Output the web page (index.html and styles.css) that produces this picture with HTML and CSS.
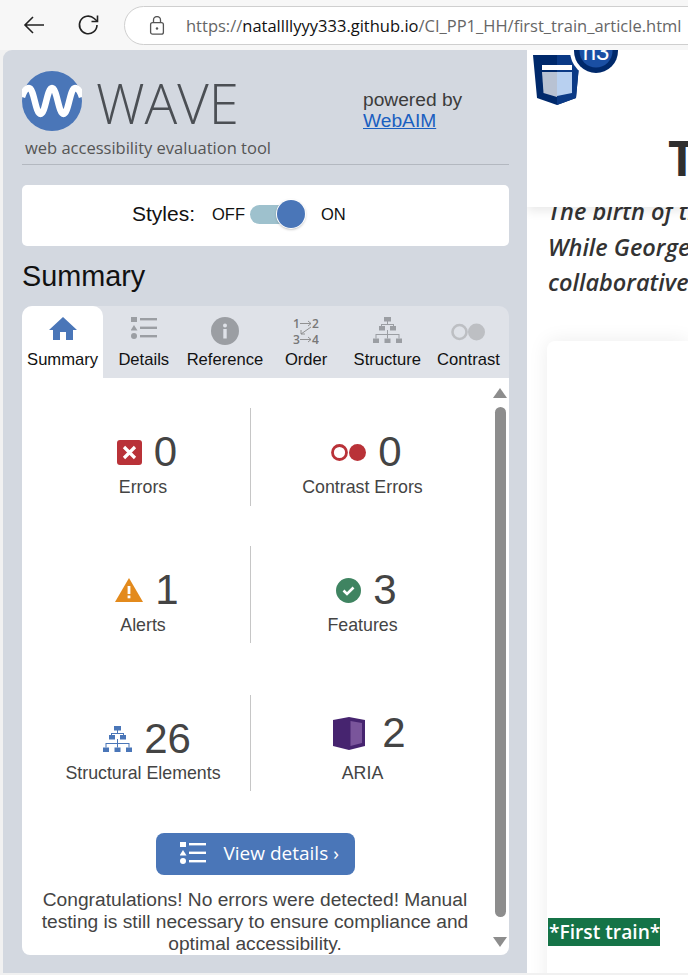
FILE: index.html
```html
<!DOCTYPE html>
<html lang="en">
<head>
  <meta charset="UTF-8">
  <meta name="viewport" content="width=device-width, initial-scale=1.0">
  <title>WAVE Summary</title>
  <link rel="stylesheet" href="styles.css">
</head>
<body>

<svg class="defs" width="0" height="0" aria-hidden="true">
  <symbol id="i-list" viewBox="0 0 26 22">
    <rect x="0" y="0" width="6" height="5"/>
    <path d="M3 8 L6.5 13.5 H-.5 Z"/>
    <circle cx="3" cy="19" r="3"/>
    <rect x="9" y="1" width="17" height="2.4"/>
    <rect x="9" y="9.6" width="17" height="2.4"/>
    <rect x="9" y="18" width="17" height="2.4"/>
  </symbol>
  <symbol id="i-tree" viewBox="0 0 29 26">
    <rect x="11" y="0" width="7" height="4.5"/>
    <rect x="6" y="9" width="6" height="4.5"/>
    <rect x="17" y="9" width="6" height="4.5"/>
    <rect x="0" y="21.5" width="6" height="4.5"/>
    <rect x="11.5" y="21.5" width="6" height="4.5"/>
    <rect x="23" y="21.5" width="6" height="4.5"/>
    <path d="M14 4h1v3h6v2h-1V8H9v1H8V7h6zM14 13h1v4h11.5v4.500h-1V18H15v3.500h-1V18H3.500v3.500h-1V17H14z"/>
  </symbol>
</svg>

<div class="toolbar">
  <svg class="tool-icon" width="24" height="20" viewBox="0 0 24 20"><path d="M22 10H3M11 2 L3 10 L11 18" fill="none" stroke="#222" stroke-width="1.6"/></svg>
  <svg class="tool-icon reload" width="24" height="24" viewBox="0 0 24 24"><path d="M20 12a8.800 8.800 0 1 1-2.800-6.500L20 8" fill="none" stroke="#222" stroke-width="1.600"/><path d="M20.500 2.500V8.500H14.500" fill="none" stroke="#222" stroke-width="1.600"/></svg>
  <div class="address">
    <svg width="16" height="19" viewBox="0 0 16 19"><path d="M4.500 6.500V4a3.500 3.500 0 0 1 7 0v2.500" fill="none" stroke="#555" stroke-width="1.300"/><rect x="1.600" y="6.600" width="12.800" height="11.600" rx="2" fill="none" stroke="#555" stroke-width="1.300"/><circle cx="8" cy="12.500" r="1.200" fill="#555"/></svg>
    <span class="url">https://<b>natallllyyy333.github.io</b>/CI_PP1_HH/first_train_article.html</span>
  </div>
</div>

<div class="main">
  <div class="wave">
    <div class="brand">
      <div class="logo">
        <div class="logo-top">
          <svg width="60" height="60" viewBox="0 0 60 60"><circle cx="30" cy="30" r="30" fill="#4a76b8"/><path d="M0 26 C2 20 4 17 7 17 C12 17 13.500 43 18.500 43 C23.500 43 25 17 30 17 C35 17 36.500 43 41.500 43 C46.500 43 48 17 53 17 C56 17 58 20 60 26" fill="none" stroke="#fff" stroke-width="6.500"/></svg>
          <span class="wave-name">WAVE</span>
        </div>
        <div class="tagline">web accessibility evaluation tool</div>
      </div>
      <div class="powered">powered by<br><a href="#">WebAIM</a></div>
    </div>

    <div class="styles-box">
      <span class="styles-label">Styles:</span>
      <span class="off">OFF</span>
      <span class="toggle"><span class="knob"></span></span>
      <span class="on">ON</span>
    </div>

    <h1>Summary</h1>

    <div class="tabs">
      <div class="tab active">
        <svg class="tab-icon" width="28" height="23" viewBox="0 0 28 23"><path fill="#4a76b8" d="M14 0 L28 13 H24 V23 H17 V15 H11 V23 H4 V13 H0 Z"/></svg>
        <span>Summary</span>
      </div>
      <div class="tab">
        <svg class="tab-icon" width="26" height="22"><use href="#i-list"/></svg>
        <span>Details</span>
      </div>
      <div class="tab">
        <svg class="tab-icon" width="28" height="28" viewBox="0 0 28 28"><circle cx="14" cy="14" r="14"/><circle cx="14" cy="8.500" r="2" fill="#dfe2e8"/><rect x="12.300" y="12" width="3.400" height="9.500" fill="#dfe2e8"/></svg>
        <span>Reference</span>
      </div>
      <div class="tab">
        <svg class="tab-icon order-icon" width="26" height="38" viewBox="0 -6 26 38">
          <text x="0" y="11" class="order-num">1</text>
          <text x="19" y="11" class="order-num">2</text>
          <text x="0" y="27" class="order-num">3</text>
          <text x="19" y="27" class="order-num">4</text>
          <path d="M7 6.500H18M15 4l3 2.500-3 2.500M7 22.500H18M15 20l3 2.500-3 2.500M18 10L8 17M8 13v4h4" fill="none" stroke="#888" stroke-width=".9"/>
        </svg>
        <span>Order</span>
      </div>
      <div class="tab">
        <svg class="tab-icon" width="29" height="26"><use href="#i-tree"/></svg>
        <span>Structure</span>
      </div>
      <div class="tab">
        <svg class="tab-icon contrast-tab" width="34" height="18" viewBox="0 0 34 18"><circle cx="8.500" cy="9" r="7" fill="none" stroke="#bdbfc3" stroke-width="2.600"/><circle cx="25.500" cy="9" r="8.500" fill="#bdbfc3"/></svg>
        <span>Contrast</span>
      </div>
    </div>

    <div class="panel">
      <div class="summary">
        <div class="stat-row first">
          <div class="stat">
            <div class="count">
              <svg width="25" height="25" viewBox="0 0 25 25"><rect width="25" height="25" rx="3" fill="#b93238"/><path d="M7 7L18 18M18 7L7 18" stroke="#fff" stroke-width="3.200"/></svg>
              <span class="num">0</span>
            </div>
            <div class="label">Errors</div>
          </div>
          <div class="stat">
            <div class="count">
              <svg width="35" height="17" viewBox="0 0 35 17"><circle cx="8.500" cy="8.500" r="7" fill="none" stroke="#b93238" stroke-width="2.800"/><circle cx="26.500" cy="8.500" r="8.500" fill="#b93238"/></svg>
              <span class="num">0</span>
            </div>
            <div class="label">Contrast Errors</div>
          </div>
        </div>

        <div class="stat-row second">
          <div class="stat">
            <div class="count">
              <svg width="28" height="24" viewBox="0 0 28 24"><path d="M14 0L28 24H0Z" fill="#e38a1c"/><rect x="12.600" y="8" width="2.800" height="8" fill="#fff"/><rect x="12.600" y="17.500" width="2.800" height="2.800" fill="#fff"/></svg>
              <span class="num">1</span>
            </div>
            <div class="label">Alerts</div>
          </div>
          <div class="stat">
            <div class="count">
              <svg width="25" height="25" viewBox="0 0 25 25"><circle cx="12.500" cy="12.500" r="12.500" fill="#3f8461"/><path d="M7.500 12.500L11 16L17.500 9.500" fill="none" stroke="#fff" stroke-width="2.600"/></svg>
              <span class="num">3</span>
            </div>
            <div class="label">Features</div>
          </div>
        </div>

        <div class="stat-row third">
          <div class="stat">
            <div class="count">
              <svg class="tree-blue" width="29" height="26"><use href="#i-tree"/></svg>
              <span class="num">26</span>
            </div>
            <div class="label">Structural Elements</div>
          </div>
          <div class="stat">
            <div class="count aria">
              <svg width="32" height="33" viewBox="0 0 32 33"><path d="M0 3L16 0L32 3V29L16 33L0 29Z" fill="#46246f"/><path d="M17.500 4L29 6V26L17.500 29Z" fill="#7a559b"/></svg>
              <span class="num">2</span>
            </div>
            <div class="label">ARIA</div>
          </div>
        </div>

        <div class="details-wrap">
          <a class="details-btn" href="#">
            <svg width="26" height="22"><use href="#i-list"/></svg>
            <span>View details ›</span>
          </a>
        </div>

        <p class="message">Congratulations! No errors were detected! Manual testing is still necessary to ensure compliance and optimal accessibility.</p>
      </div>

      <div class="scrollbar">
        <span class="arrow-up"></span>
        <span class="thumb"></span>
        <span class="arrow-down"></span>
      </div>
    </div>
  </div>

  <div class="page">
    <div class="page-head">
      <svg class="badge" width="92" height="58" viewBox="0 0 92 58">
        <path d="M3 5H50L46 48L27 55L7 48Z" fill="#00296b"/>
        <path d="M27 5H50L46 48L27 55Z" fill="#0b3a86"/>
        <rect x="12" y="15" width="30" height="5" fill="#fff"/>
        <path d="M12 22H27V47L13.500 43Z" fill="#b8c2d3"/>
        <path d="M27 22H42V43L27 46Z" fill="#b8d0f0"/>
        <circle cx="66" cy="1" r="26" fill="#fff"/>
        <circle cx="66" cy="1" r="22" fill="#00296b"/>
        <circle cx="66" cy="1" r="16.500" fill="#1a4fa3"/>
        <text x="66" y="10" class="badge-text">h3</text>
      </svg>
      <div class="page-title">The First Train</div>
    </div>
    <div class="intro">
      <div>The birth of the railway</div>
      <div>While George Stephenson</div>
      <div>collaborative effort of many</div>
    </div>
    <div class="card">
      <span class="card-tag">*First train*</span>
    </div>
  </div>
</div>

</body>
</html>
```

FILE: styles.css
```css
body {
  margin: 0;
  width: 688px;
  height: 975px;
  overflow: hidden;
  background: #f1f1f1;
  font-family: "Liberation Sans", sans-serif;
}

.defs { position: absolute; }

/* browser bar */
.toolbar {
  display: flex;
  align-items: center;
  height: 50px;
  box-sizing: border-box;
  padding-left: 22px;
  background: #f7f7f7;
  overflow: hidden;
}

.tool-icon { flex: none; }
.reload { margin-left: 31px; }

.address {
  flex: none;
  display: flex;
  align-items: center;
  gap: 21px;
  width: 600px;
  height: 39px;
  margin-left: 23px;
  padding-left: 24px;
  box-sizing: border-box;
  background: #fff;
  border: 1px solid #cfcfcf;
  border-radius: 20px;
}

.url {
  font-family: "Open Sans", sans-serif;
  font-size: 16.500px;
  color: #666;
  white-space: nowrap;
}

.url b { font-weight: 400; color: #111; }

.main {
  display: flex;
  height: 923px;
}

/* wave sidebar */
.wave {
  flex: none;
  width: 524px;
  margin-left: 3px;
  padding: 0 18px 0 19px;
  box-sizing: border-box;
  background: #d3d8e0;
  border-top-left-radius: 9px;
}

.brand {
  display: flex;
  height: 115px;
  padding-top: 21px;
  box-sizing: border-box;
  border-bottom: 1px solid #b3b8c0;
}

.logo { width: 341px; }

.logo-top {
  display: flex;
  align-items: center;
  gap: 14px;
  height: 60px;
}

.wave-name {
  padding-top: 4px;
  font-family: "Open Sans", sans-serif;
  font-weight: 300;
  font-size: 54.500px;
  line-height: 60px;
  color: #4b4f54;
}

.tagline {
  margin: 6px 0 0 3px;
  font-family: "Open Sans", sans-serif;
  font-size: 16.500px;
  line-height: 22px;
  color: #555;
  white-space: nowrap;
}

.powered {
  margin-top: 18px;
  font-size: 19.200px;
  line-height: 21px;
  color: #3c3c3c;
}

.powered a { color: #1a5fc0; }

.styles-box {
  display: flex;
  align-items: center;
  height: 61px;
  margin-top: 20px;
  padding: 0 0 3px 110px;
  box-sizing: border-box;
  background: #fff;
  border-radius: 5px;
}

.styles-label { font-size: 21px; color: #111; margin-right: 17px; }
.off, .on { font-size: 16.500px; color: #111; }

.toggle {
  position: relative;
  width: 40px;
  height: 19px;
  margin-left: 5px;
  background: #9ec1cd;
  border-radius: 10px;
}

.knob {
  position: absolute;
  left: 27px;
  top: -5px;
  width: 28px;
  height: 28px;
  background: #4a76b8;
  border-radius: 50%;
  box-shadow: 0 0 0 1px #fff, 0 1px 3px rgba(0, 0, 0, .4);
}

.on { margin-left: 31px; }

h1 {
  margin: 14px 0 13px;
  font-size: 28.800px;
  line-height: 33px;
  font-weight: 400;
  color: #111;
}

.tabs {
  display: flex;
  height: 72px;
  background: #dfe2e8;
  border-radius: 10px 10px 0 0;
}

.tab {
  flex: 1;
  position: relative;
  font-size: 16.600px;
  color: #111;
  text-align: center;
  border-radius: 10px 10px 0 0;
}

.tab span {
  position: absolute;
  left: 0;
  right: 0;
  top: 45px;
  line-height: 18px;
}

.tab.active { background: #fff; }

.tab-icon {
  display: block;
  margin: 11px auto 0;
  fill: #9b9ea3;
}

.contrast-tab { margin-top: 17px; }
.order-icon { margin-top: 5px; }

.order-num {
  font-family: "Open Sans", sans-serif;
  font-size: 12px;
  font-weight: 600;
  fill: #777;
}

.panel {
  display: flex;
  height: 577px;
  background: #fff;
  border-radius: 0 0 8px 8px;
}

.summary {
  flex: none;
  width: 469px;
  padding: 30px 0 0 14px;
  box-sizing: border-box;
}

.stat-row {
  display: grid;
  grid-template-columns: 215px 223px;
  height: 97px;
}

.first { height: 98px; }
.second { margin-top: 40px; }
.third { margin-top: 52px; height: 96px; }
.third .label { margin-top: -1px; }

.stat:first-child { border-right: 1px solid #c6c6c6; }

.count {
  display: flex;
  align-items: center;
  justify-content: center;
  gap: 12px;
  height: 48px;
  margin-top: 20px;
  padding-left: 8px;
}

.count.aria {
  gap: 17px;
  padding-left: 14px;
  transform: translateY(-6px);
}

.num {
  font-size: 42px;
  line-height: 48px;
  color: #444;
}

.label {
  font-size: 17.800px;
  line-height: 22px;
  color: #444;
  text-align: center;
}

.tree-blue { fill: #4a76b8; }

.details-wrap {
  display: flex;
  justify-content: center;
  width: 438px;
  margin-top: 42px;
}

.details-btn {
  display: flex;
  align-items: center;
  gap: 18px;
  width: 199px;
  height: 42px;
  box-sizing: border-box;
  padding: 0 0 2px 24px;
  background: #4a76b8;
  border-radius: 8px;
  fill: #fff;
  color: #fff;
  font-family: "Open Sans", sans-serif;
  font-size: 19px;
  text-decoration: none;
}

.message {
  width: 438px;
  margin: 14px 0 0;
  font-size: 19.200px;
  line-height: 22px;
  color: #444;
  text-align: center;
}

.scrollbar {
  display: flex;
  flex-direction: column;
  align-items: center;
  width: 18px;
  padding-top: 10px;
  box-sizing: border-box;
}

.arrow-up, .arrow-down {
  width: 0;
  height: 0;
  border-left: 7px solid transparent;
  border-right: 7px solid transparent;
}

.arrow-up { border-bottom: 10px solid #8d8d8d; }
.arrow-down { border-top: 10px solid #8d8d8d; margin-top: 20px; }

.thumb {
  width: 11px;
  height: 510px;
  margin-top: 9px;
  background: #8d8d8d;
  border-radius: 6px;
}

/* page behind the sidebar */
.page {
  flex: 1;
  min-width: 0;
  overflow: hidden;
  background: #fff;
}

.page-head {
  position: relative;
  z-index: 1;
  display: flex;
  height: 157px;
  padding-left: 3px;
  background: #fff;
  box-shadow: 0 4px 10px rgba(0, 0, 0, .09);
}

.badge { flex: none; }

.badge-text {
  font-family: "Liberation Sans", sans-serif;
  font-size: 24px;
  fill: #fff;
  text-anchor: middle;
}

.page-title {
  margin: 84px 0 0 46px;
  font-family: "Open Sans", sans-serif;
  font-size: 48px;
  font-weight: 700;
  line-height: 48px;
  color: #2f2f2f;
  white-space: nowrap;
}

.intro {
  margin: -13px 0 0 21px;
  font-family: "Open Sans", sans-serif;
  font-size: 23.500px;
  font-style: italic;
  font-weight: 600;
  line-height: 35.500px;
  color: #333;
  white-space: nowrap;
}

.card {
  height: 700px;
  margin: 40px 0 0 20px;
  padding-top: 577px;
  box-sizing: border-box;
  background: #fff;
  border-radius: 8px 0 0 0;
  box-shadow: 0 0 20px rgba(0, 0, 0, .08);
}

.card-tag {
  display: inline-block;
  margin-left: 1px;
  padding: 0 1px;
  width: 112px;
  box-sizing: border-box;
  font-family: "Open Sans", sans-serif;
  font-size: 19.200px;
  font-weight: 600;
  line-height: 28px;
  color: #fff;
  background: #157347;
  white-space: nowrap;
}
```
